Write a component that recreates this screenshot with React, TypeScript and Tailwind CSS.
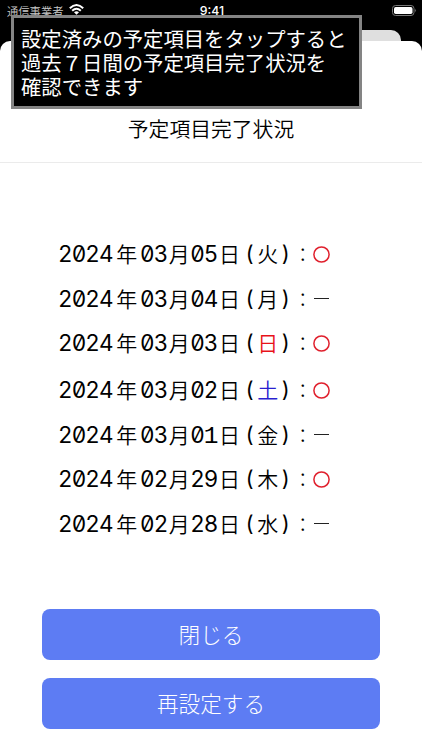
import React from "react";

type Row = { date: string; day: string; done: boolean; color?: string; height: string };

const rows: Row[] = [
  { date: "2024年03月05日", day: "火", done: true, height: "h-[44.5px]" },
  { date: "2024年03月04日", day: "月", done: false, height: "h-[44.5px]" },
  { date: "2024年03月03日", day: "日", done: true, color: "text-[#e8121a]", height: "h-[47px]" },
  { date: "2024年03月02日", day: "土", done: true, color: "text-[#2a1fd0]", height: "h-[44.5px]" },
  { date: "2024年03月01日", day: "金", done: false, height: "h-[44.5px]" },
  { date: "2024年02月29日", day: "木", done: true, height: "h-[44.5px]" },
  { date: "2024年02月28日", day: "水", done: false, height: "h-[44.5px]" },
];

function cellClass(ch: string) {
  if (ch === "年") return "w-[27.3px] text-[21px]";
  if (ch === "月") return "w-[22.8px] text-[21px]";
  if (ch === "日") return "w-[22.8px] text-[21px]";
  if (ch === "1") return "w-[13.7px] font-['Liberation_Mono',monospace] text-[24.5px] font-normal";
  return "w-[13.7px] font-['Inter',sans-serif] text-[22.5px] font-normal [font-feature-settings:'zero','tnum']";
}

function StatusRow({ row }: { row: Row }) {
  return (
    <li className={`flex items-start ${row.height}`}>
      <div className="flex h-[30px] items-baseline whitespace-nowrap leading-[30px]">
        {row.date.split("").map((ch, i) => (
          <span key={i} className={`flex justify-center ${cellClass(ch)}`}>{ch}</span>
        ))}
        <span className="flex w-[18px] justify-center font-['Inter',sans-serif] text-[21.5px] font-normal [font-feature-settings:'case']">(</span>
        <span className={`flex w-[18px] justify-center text-[21px] ${row.color ?? ""}`}>{row.day}</span>
        <span className="flex w-[18px] justify-center font-['Inter',sans-serif] text-[21.5px] font-normal [font-feature-settings:'case']">)</span>
        <span className="flex w-[16px] justify-center text-[19px] font-light">：</span>
      </div>
      <span className="flex h-[32px] w-[22px] items-center justify-center">
        {row.done ? (
          <svg className="size-[17px]" viewBox="0 0 17 17" fill="none" stroke="#e0202d" strokeWidth="1.5">
            <circle cx="8.5" cy="8.5" r="7.6" />
          </svg>
        ) : (
          <span className="h-[1.5px] w-[15px] bg-[#222]" />
        )}
      </span>
    </li>
  );
}

export default function App() {
  return (
    <div className="relative flex h-[750px] w-[422px] flex-col overflow-hidden bg-black font-['Noto_Sans_CJK_JP',sans-serif] font-[350] text-black">
      <header className="flex h-[30px] shrink-0 items-start justify-between pl-[7px] pr-[5px] text-white">
        <div className="flex w-[150px] items-start gap-[5px]">
          <span className="text-[11.3px] leading-[22px] text-[#c9c9c9]">通信事業者</span>
          <svg className="mt-[4px] h-[11px] w-[15px]" viewBox="0 0 15 11" fill="none" stroke="white" strokeWidth="2">
            <path d="M.8 4.2Q7.5-2.1 14.2 4.2M3.2 6.7Q7.5 2.8 11.8 6.7" />
            <path d="M5 8.3Q7.5 6.2 10 8.3L7.5 10.8Z" fill="white" stroke="none" />
          </svg>
        </div>
        <span className="font-['Inter',sans-serif] text-[12.3px] font-medium leading-[22px]">9:41</span>
        <div className="flex w-[150px] justify-end pt-[5px]">
          <svg className="h-[11px] w-[25px]" viewBox="0 0 25 11">
            <rect x=".5" y=".5" width="21.5" height="10" rx="3" fill="none" stroke="#777" />
            <rect x="2" y="2" width="18.5" height="7" rx="1.7" fill="white" />
            <path d="M23.2 3.7Q25 5.5 23.2 7.3Z" fill="#777" />
          </svg>
        </div>
      </header>
      <div className="mx-[21px] h-[11px] shrink-0 rounded-t-[10px] bg-[#dfdfdf]" />
      <main className="flex flex-1 flex-col rounded-t-[10px] bg-white">
        <h1 className="flex h-[122px] items-end justify-center border-b border-[#ebebeb] pb-[18px] text-[20.8px] leading-[32px]">
          予定項目完了状況
        </h1>
        <ul className="mt-[75px] pl-[58.4px]">
          {rows.map((row) => <StatusRow key={row.date} row={row} />)}
        </ul>
        <div className="mt-auto flex flex-col gap-[18px] px-[42px] pb-[21px] text-[21.6px] font-light text-white">
          <button className="h-[51px] rounded-[8px] bg-[#5d7cf3] pb-[1px]">閉じる</button>
          <button className="h-[51px] rounded-[8px] bg-[#5d7cf3] pb-[1px]">再設定する</button>
        </div>
      </main>
      <aside className="absolute left-[11px] top-[15px] h-[94px] w-[351px] whitespace-nowrap border-[3px] border-[#848484] bg-black pl-[7px] pt-[8px] text-[20.35px] font-normal leading-[24px] text-white">
        <p>設定済みの予定項目をタップすると</p>
        <p>過去７日間の予定項目完了状況を</p>
        <p>確認できます</p>
      </aside>
    </div>
  );
}
